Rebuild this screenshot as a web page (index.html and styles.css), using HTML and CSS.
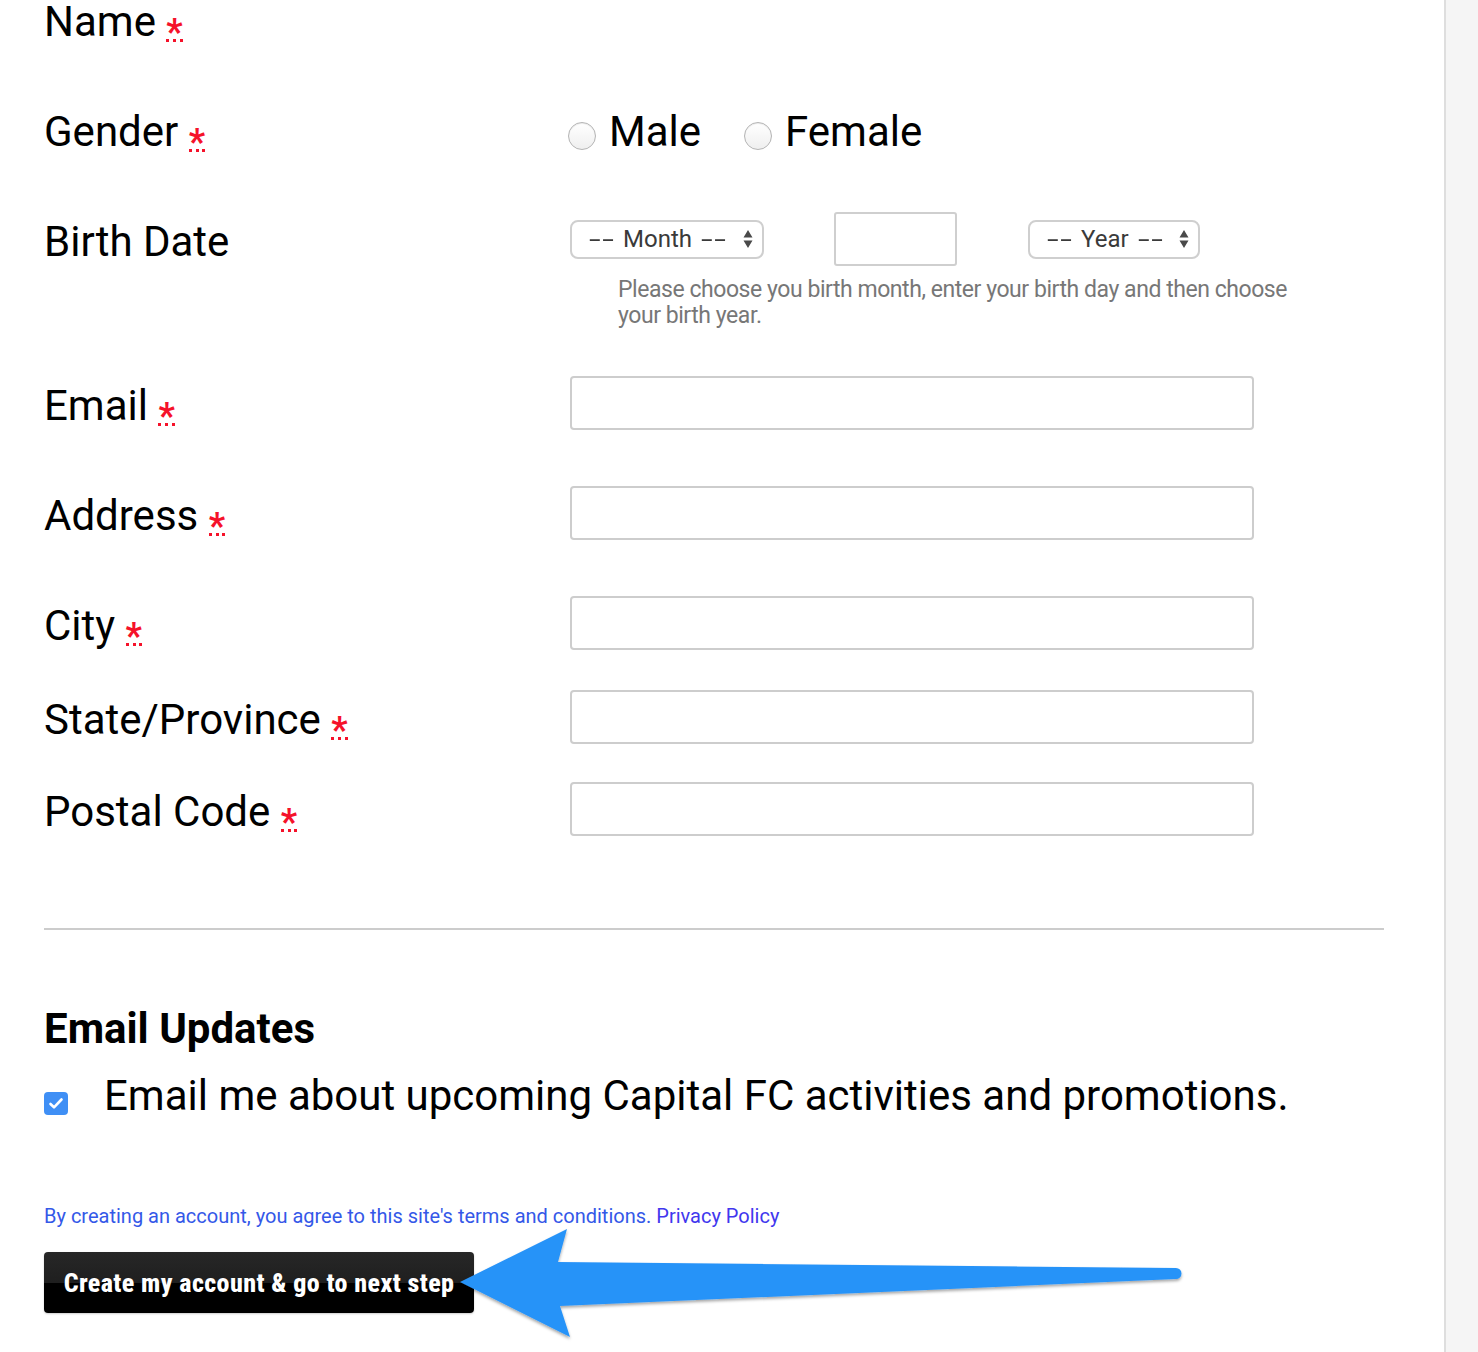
FILE: index.html
```html
<!DOCTYPE html>
<html lang="en">
<head>
<meta charset="utf-8">
<title>Create account</title>
<link rel="stylesheet" href="styles.css">
</head>
<body>
<div class="page">
  <main class="main">
    <form class="form">
      <div class="row row-name">
        <label class="label">Name <abbr class="req" title="required">*</abbr></label>
      </div>
      <div class="row row-gender">
        <span class="label">Gender <abbr class="req" title="required">*</abbr></span>
        <div class="radios">
          <label class="radio"><input type="radio" name="gender"><span>Male</span></label>
          <label class="radio"><input type="radio" name="gender"><span>Female</span></label>
        </div>
      </div>
      <div class="row row-birth">
        <span class="label">Birth Date</span>
        <div class="birth">
          <span class="select month"><span class="opt"><span class="dash">--</span> Month <span class="dash">--</span></span><svg class="updown" width="10" height="20" viewBox="0 0 10 20"><path d="M5 1 L9.5 8.5 H0.5 Z M5 19 L9.5 11.5 H0.5 Z" fill="#4a4a4a"/></svg></span>
          <input class="day" type="text">
          <span class="select year"><span class="opt"><span class="dash">--</span> Year <span class="dash">--</span></span><svg class="updown" width="10" height="20" viewBox="0 0 10 20"><path d="M5 1 L9.5 8.5 H0.5 Z M5 19 L9.5 11.5 H0.5 Z" fill="#4a4a4a"/></svg></span>
        </div>
      </div>
      <p class="hint">Please choose you birth month, enter your birth day and then choose<br>your birth year.</p>
      <div class="row row-email">
        <label class="label">Email <abbr class="req" title="required">*</abbr></label>
        <input class="text" type="text">
      </div>
      <div class="row row-address">
        <label class="label">Address <abbr class="req" title="required">*</abbr></label>
        <input class="text" type="text">
      </div>
      <div class="row row-city">
        <label class="label">City <abbr class="req" title="required">*</abbr></label>
        <input class="text" type="text">
      </div>
      <div class="row row-state">
        <label class="label">State/Province <abbr class="req" title="required">*</abbr></label>
        <input class="text" type="text">
      </div>
      <div class="row row-postal">
        <label class="label">Postal Code <abbr class="req" title="required">*</abbr></label>
        <input class="text" type="text">
      </div>

      <hr class="divider">

      <h2 class="updates-title">Email Updates</h2>
      <label class="optin"><span class="check"><svg width="16" height="13" viewBox="0 0 16 13"><path d="M2.5 7 L6 10.3 L13.5 2.5" fill="none" stroke="#fff" stroke-width="2.6" stroke-linecap="round" stroke-linejoin="round"/></svg></span><span>Email me about upcoming Capital FC activities and promotions.</span></label>

      <p class="terms">By creating an account, you agree to this site's terms and conditions. <a href="#">Privacy Policy</a></p>

      <button class="submit" type="button">Create my account &amp; go to next step</button>
    </form>
    <svg class="arrow" width="1444" height="1352" viewBox="0 0 1444 1352">
      <defs>
        <filter id="sh" x="-5%" y="-20%" width="110%" height="140%">
          <feDropShadow dx="0" dy="2" stdDeviation="1.5" flood-color="#000" flood-opacity="0.35"/>
        </filter>
      </defs>
      <path filter="url(#sh)" fill="#2893f8" d="M460 1282 L567 1229 L558 1262 L1176 1268 A5.5 5.5 0 0 1 1176 1279 L560 1306 L570 1337 Z"/>
    </svg>
  </main>
  <aside class="side"></aside>
</div>
</body>
</html>
```

FILE: styles.css
```css
* { box-sizing: border-box; }
html, body { margin: 0; padding: 0; background: #fff; }
body { font-family: "Roboto", "Liberation Sans", sans-serif; color: #000; overflow: hidden; }

.page { display: flex; height: 1352px; }
.main { position: relative; width: 1444px; flex: none; padding-left: 44px; }
.side { flex: 1; background: #f5f5f5; border-left: 2px solid #dedede; }

.form { width: 1340px; }

.row { display: grid; grid-template-columns: 526px 684px; height: 54px; align-items: start; }
.row-name { height: 46px; }
.row-name .label { line-height: 44px; padding-top: 0; }
.row-gender { margin-top: 56px; }
.row-birth { margin-top: 56px; }
.row-email { margin-top: 47px; }
.row-address, .row-city { margin-top: 56px; }
.row-state { margin-top: 40px; }
.row-postal { margin-top: 38px; }

.label { font-size: 42px; line-height: 54px; padding-top: 3px; white-space: nowrap; }

.req {
  display: inline-block;
  color: #f5122a;
  font-size: 36px;
  font-weight: 700;
  line-height: 14px;
  text-decoration: none;
  border-bottom: 3px dotted #f5122a;
  vertical-align: -8px;
}

.radios { display: flex; align-items: baseline; font-size: 42px; line-height: 54px; padding-top: 3px; margin-left: -2px; }
.radio { display: inline-flex; align-items: baseline; margin-right: 43px; }
.radio input {
  appearance: none; -webkit-appearance: none;
  width: 28px; height: 28px; margin: 0 13px 0 0;
  border: 1px solid #b4b4b4; border-radius: 50%;
  background: linear-gradient(#ffffff, #efefef);
  box-shadow: inset 0 1px 1px rgba(0,0,0,0.08);
  position: relative; top: 4px;
}

.birth { display: flex; align-items: center; height: 54px; }
.select {
  display: inline-flex; align-items: center; justify-content: space-between;
  height: 39px; border: 2px solid #cfcfcf; border-radius: 8px;
  font-size: 24px; color: #3a3a3a; padding: 0 9px 0 17px; background: #fff;
  white-space: nowrap;
}
.opt { display: inline-flex; align-items: center; gap: 9px; }
.dash { display: inline-block; width: 25px; transform: scaleX(1.75); transform-origin: left center; letter-spacing: 1px; }
.select.month { width: 194px; }
.select.year { width: 172px; }
.updown { display: block; }
.day {
  width: 123px; height: 54px; margin: 0 71px 0 70px; border: 2px solid #cfcfcf; border-radius: 3px; background: #fff;
  align-self: flex-start;
}

.hint {
  margin: 11px 0 0 574px; width: 700px;
  font-size: 23px; line-height: 26px; color: #777;
  font-stretch: 91%; letter-spacing: -0.45px;
  white-space: nowrap;
}

.text { width: 684px; height: 54px; border: 2px solid #cdcdcd; border-radius: 4px; background: #fff; margin: 0; }

.divider { margin: 92px 0 0 0; border: 0; height: 2px; background: #cccccc; }

.updates-title { margin: 75px 0 0 0; font-size: 42px; line-height: 48px; font-weight: 700; }

.optin { display: flex; align-items: baseline; margin-top: 16px; font-size: 42px; line-height: 54px; }
.check {
  flex: none; width: 24px; height: 23px; border-radius: 4px;
  background: #3f8ff5; display: inline-flex; align-items: center; justify-content: center;
  margin-right: 36px;
}

.terms { margin: 81px 0 0 0; font-size: 20px; line-height: 24px; color: #3458e8; font-stretch: 92%; letter-spacing: 0; }
.terms a { color: #4137ee; text-decoration: none; }

.submit {
  display: block; margin-top: 24px; width: 430px; height: 61px;
  border: 0; border-radius: 4px;
  background: linear-gradient(#272727 0%, #1f1f1f 50%, #000 50%, #000 100%);
  color: #fff; font-family: "Roboto", "Liberation Sans", sans-serif; font-weight: 800; font-size: 26px;
  font-stretch: 86%; letter-spacing: 0.4px;
  text-shadow: 0 1px 1px rgba(0,0,0,0.8);
  box-shadow: 0 1px 2px rgba(0,0,0,0.2);
  padding: 0;
}

.arrow { position: absolute; left: 0; top: 0; pointer-events: none; }
```
